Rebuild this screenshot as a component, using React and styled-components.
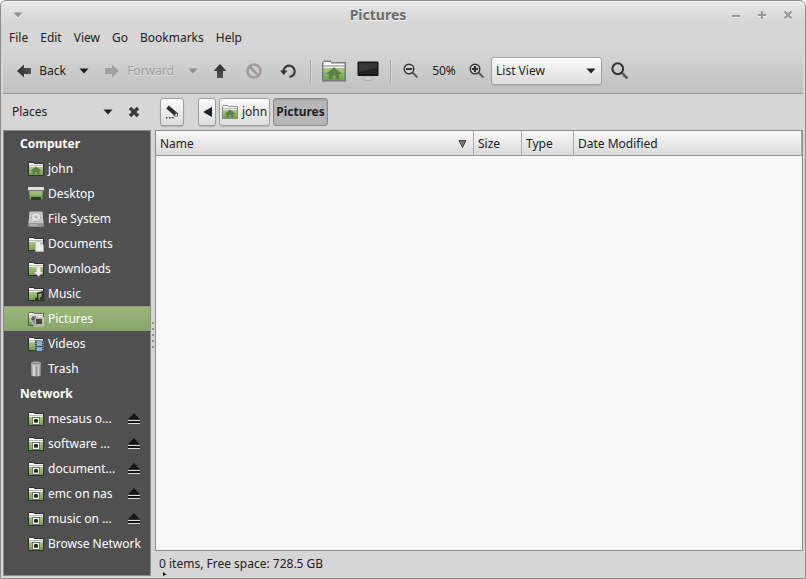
import styled, { createGlobalStyle, css } from "styled-components";

const GlobalStyle = createGlobalStyle`
  * {
    box-sizing: border-box;
  }
  body {
    margin: 0;
    background: #ffffff;
    color: #212121;
    font: 12px/16px "Noto Sans", sans-serif;
  }
  button, select {
    margin: 0;
    padding: 0;
    border: none;
    background: none;
    color: inherit;
    font: inherit;
  }
  svg {
    display: block;
    flex: none;
  }
`;

const Window = styled.div`
  display: flex;
  flex-direction: column;
  min-height: 100vh;
  padding: 0 2px 2px;
  border: 1px solid #8b8b8b;
  border-radius: 6px 6px 0 0;
  background: linear-gradient(#e8e8e8, #d6d6d6 22px);
  box-shadow: inset 0 1px #f4f4f4;
`;

const TitleBar = styled.header`
  display: grid;
  grid-template-columns: 30px 1fr 80px;
  align-items: center;
  height: 26px;
  padding-top: 2px;
`;

const Title = styled.h1`
  margin: 0;
  color: #6c6c6c;
  font-size: 14px;
  line-height: 20px;
  text-align: center;
  text-shadow: 0 1px #f2f2f2;
`;

const TitleButtons = styled.div`
  display: flex;
`;

const TitleButton = styled.button`
  display: grid;
  place-items: center;
  width: ${(p) => p.$width || 26}px;
  height: 20px;
  filter: drop-shadow(0 1px #f2f2f2);
`;

const MenuBar = styled.nav`
  display: flex;
  height: 22px;
`;

const MenuItem = styled.button`
  padding: 0 6px;
`;

const Toolbar = styled.div`
  display: flex;
  align-items: center;
  height: 45px;
  padding-left: 6px;
  border-bottom: 1px solid #979797;
  background: linear-gradient(#d6d6d6, #c0c0c0);
`;

const ToolButton = styled.button`
  display: flex;
  align-items: center;
  justify-content: center;
  gap: 7px;
  width: ${(p) => p.$width}px;
  height: 32px;
  flex: none;
  &:disabled {
    color: #9d9d9d;
    text-shadow: 0 1px #e2e2e2;
  }
`;

const Separator = styled.div`
  width: 2px;
  height: 22px;
  margin: 0 5px;
  flex: none;
  border-left: 1px solid #a3a3a3;
  border-right: 1px solid #dadada;
`;

const Zoom = styled.span`
  width: 38px;
  text-align: center;
`;

const raised = css`
  border: 1px solid #a0a0a0;
  border-radius: 3px;
  background: linear-gradient(#fbfbfb, #dcdcdc);
  box-shadow: 0 1px 1px #b4b4b4, inset 0 1px #ffffff;
`;

const SelectBox = styled.div`
  position: relative;
  width: 111px;
  margin-right: 4px;
  svg {
    position: absolute;
    top: 11px;
    right: 6px;
    pointer-events: none;
  }
`;

const Select = styled.select`
  ${raised}
  width: 100%;
  height: 28px;
  padding-left: 4px;
  appearance: none;
`;

const Main = styled.div`
  display: flex;
  flex: 1;
`;

const Side = styled.aside`
  display: flex;
  flex-direction: column;
  width: 148px;
  flex: none;
`;

const SideHeader = styled.div`
  display: flex;
  align-items: center;
  height: 36px;
  padding: 0 6px 0 9px;
`;

const PlacesButton = styled.button`
  display: flex;
  flex: 1;
  align-items: center;
  justify-content: space-between;
`;

const CloseButton = styled.button`
  display: grid;
  place-items: center;
  width: 22px;
  height: 22px;
  margin-left: 10px;
`;

const Places = styled.div`
  flex: 1;
  border: 1px solid #8b8b8b;
  background: #505050;
  color: #ffffff;
`;

const Group = styled.h2`
  margin: 0;
  padding-left: 16px;
  font-size: 12px;
  line-height: 25px;
`;

const PlaceList = styled.ul`
  margin: 0;
  padding: 0;
  list-style: none;
`;

const Place = styled.li`
  display: flex;
  align-items: center;
  height: 25px;
  padding: 0 9px 0 24px;
  ${(p) =>
    p.$active &&
    css`
      background: linear-gradient(#9ab87c, #87a668);
      box-shadow: inset 0 1px #8d9d80, inset 0 -1px #8d9d80;
    `}
`;

const PlaceLink = styled.a`
  display: flex;
  align-items: center;
  gap: 4px;
  flex: 1;
  min-width: 0;
  color: #ffffff;
  text-decoration: none;
  white-space: nowrap;
`;

const Eject = styled.button`
  display: grid;
  place-items: center;
  width: 14px;
  height: 16px;
`;

const Splitter = styled.div`
  display: flex;
  flex-direction: column;
  align-items: center;
  justify-content: center;
  gap: 4px;
  width: 4px;
  flex: none;
`;

const Grip = styled.i`
  width: 2px;
  height: 2px;
  background: #8f8f8f;
`;

const Content = styled.main`
  display: flex;
  flex-direction: column;
  flex: 1;
  min-width: 0;
`;

const PathBar = styled.nav`
  display: flex;
  align-items: center;
  gap: 3px;
  height: 36px;
  padding-left: 5px;
`;

const PathButton = styled.button`
  ${raised}
  display: flex;
  align-items: center;
  justify-content: center;
  gap: 4px;
  height: 28px;
  padding: 0 2px;
  ${(p) =>
    p.$active &&
    css`
      border-color: #8b8b8b;
      background: #b6b6b6;
      box-shadow: inset 0 1px 2px #999999;
      font-weight: bold;
    `}
`;

const EditButton = styled(PathButton)`
  width: 24px;
  margin-right: 11px;
`;

const ScrollButton = styled(PathButton)`
  width: 18px;
`;

const FileView = styled.section`
  flex: 1;
  border: 1px solid #8b8b8b;
  background: #f7f7f7;
`;

const Table = styled.table`
  width: 100%;
  border-spacing: 0;
  table-layout: fixed;
`;

const Column = styled.th`
  width: ${(p) => p.$width || "auto"};
  height: 25px;
  padding: 2px 6px 0 4px;
  border-right: 1px solid #adadad;
  border-bottom: 1px solid #979797;
  background: linear-gradient(#f9f9f9, #d9d9d9);
  font-weight: normal;
  text-align: left;
`;

const ColumnLabel = styled.div`
  display: flex;
  align-items: center;
  justify-content: space-between;
`;

const Status = styled.footer`
  position: relative;
  height: 25px;
  padding: 5px 4px;
`;

const Pointer = styled.svg`
  position: absolute;
  left: 8px;
  bottom: 0;
`;

const Caret = ({ color = "#212121" }) => (
  <svg width="10" height="6" viewBox="0 0 10 6">
    <path d="M.5.5h9L5 5.5z" fill={color} />
  </svg>
);

const Arrow = ({ rotate = 0, color = "#2d2d2d", end = "#555" }) => (
  <svg width="16" height="16" viewBox="0 0 16 16">
    <defs>
      <linearGradient id={`arrow${rotate}`}>
        <stop stopColor={color} />
        <stop offset="1" stopColor={end} />
      </linearGradient>
    </defs>
    <path d="M1 8l7-6.500v3.500h7v6H8v3.500z" fill={`url(#arrow${rotate})`} transform={`rotate(${rotate} 8 8)`} />
  </svg>
);

const Stop = () => (
  <svg width="16" height="16" viewBox="0 0 16 16" fill="none" stroke="#a29b9b" strokeWidth="2.6">
    <circle cx="8" cy="8" r="6.5" />
    <path d="M3.5 3.5l9 9" />
  </svg>
);

const Reload = () => (
  <svg width="16" height="16" viewBox="0 0 16 16">
    <path d="M3.500 8.500A5.600 5.600 0 1 1 9.500 13.900" fill="none" stroke="#3a3a3a" strokeWidth="2.200" />
    <path d="M0 7.500h7.500L3.700 12z" fill="#333" />
  </svg>
);

const Magnifier = ({ sign, size = 16 }) => (
  <svg width={size} height={size} viewBox="0 0 16 16" fill="none" stroke="#333">
    <path d="M9.5 9.5l5 5" stroke="#5a5a5a" strokeWidth={sign ? 1.8 : 2.3} />
    <circle cx="6" cy="6" r="4.8" fill={sign ? "#d0d0d0" : "none"} strokeWidth={sign ? 1.4 : 1.8} />
    {sign && <path d="M3 6h6" strokeWidth="2" />}
    {sign === "+" && <path d="M6 3v6" strokeWidth="2" />}
  </svg>
);

const Monitor = () => (
  <svg width="22" height="20" viewBox="0 0 22 20">
    <ellipse cx="11" cy="17.5" rx="5" ry="1.8" fill="#e4e4e4" stroke="#888" strokeWidth=".7" />
    <path d="M9 14h4v3.5H9z" fill="#c5c5c5" />
    <rect x=".5" y=".5" width="21" height="14.500" rx="1" fill="#171717" />
    <path d="M2 2h18v5L2 11z" fill="#373737" />
    <path d="M2 11l18-4v6H2z" fill="#242424" />
  </svg>
);

const Edit = () => (
  <svg width="16" height="16" viewBox="0 0 16 16">
    <path d="M3.500 3l7.500 6.500" stroke="#2e2e2e" strokeWidth="4" />
    <path d="M9.300 11.300l3-3.600 1.700 1.600v3.200h-3.300z" fill="#3a3a3a" />
    <path d="M10.800 11.200l1.700-1.900.9.900v1.700h-1.900z" fill="#eeeeee" />
    <path d="M2 13h1.500v1.500H2zM5 13h1.500v1.500H5zM8 13h1.500v1.500H8z" fill="#444" />
  </svg>
);

// small drawings that lie over the folder of each place
const emblems = {
  home: <path d="M8 5.500L2.500 10h2v3.500H7V11h2v2.500h2.500V10h2z" fill="#5b8149" />,
  documents: (
    <g>
      <path d="M7.500 5.500H12L15.500 9v6.500h-8z" fill="#eee" stroke="#bbb" strokeWidth=".5" />
      <path d="M12 5.500V9h3.500z" fill="#c8c8c8" />
    </g>
  ),
  downloads: <path d="M8.500 6h4v5H15l-4.500 4.500L6 11h2.500z" fill="#f1f1f1" stroke="#999" strokeWidth=".4" />,
  music: (
    <g fill="#333">
      <path d="M9 6.500L15 5v2l-4.500 1v5H9zM13.500 6H15v6.500h-1.500z" />
      <circle cx="8.800" cy="13.300" r="1.800" />
      <circle cx="13.500" cy="12.500" r="1.800" />
    </g>
  ),
  pictures: (
    <g>
      <path d="M2.500 8.500L4 5l3.500-1L9 6.500h6.500v8.500h-9z" fill="#8d8d8d" stroke="#e2e2e2" strokeWidth=".8" />
      <circle cx="5" cy="7.500" r="1.500" fill="#555" />
      <path d="M7.500 7.500h7v6h-7z" fill="#454545" stroke="#b8b8b8" />
    </g>
  ),
  videos: (
    <g>
      <path d="M7 4.500h9v11H7z" fill="#3b4c56" />
      <path d="M9 5h5v5H9zM9 11h5v4H9z" fill="#86b2ca" />
      <path d="M8 5v10M15 5v10" stroke="#b9cdd6" strokeDasharray="1 1" />
    </g>
  ),
  network: (
    <g>
      <path d="M4 6h8v8H4z" fill="#6a7d58" />
      <path d="M5 7h6v6H5z" fill="#f0f0f0" />
      <path d="M6 8h4v4H6z" fill="#777" />
      <path d="M7 8h2v1h1v2H6V9h1z" fill="#262626" />
    </g>
  ),
};

const FolderIcon = ({ emblem, size = 16 }) => (
  <svg width={size} height={size} viewBox="0 0 16 16">
    <defs>
      <linearGradient id="folder" x2="0" y2="1">
        <stop stopColor="#a8ca80" />
        <stop offset="1" stopColor="#759f4b" />
      </linearGradient>
    </defs>
    <path d="M0 15V2h1V1h5v1h10v13z" fill="#000000" fillOpacity=".4" />
    <path d="M1 4V2h5v1h9v1z" fill="#fbfbfb" />
    <path d="M1 4h14v1H1z" fill="#b8b8b8" />
    <path d="M1 5h14v1H1z" fill="#eeeeee" />
    <path d="M1 6h14v8H1z" fill="url(#folder)" />
    {emblems[emblem]}
  </svg>
);

const DesktopIcon = () => (
  <svg width="16" height="16" viewBox="0 0 16 16">
    <path d="M1 3h14v11H1z" fill="#80a958" stroke="#435336" />
    <path d="M1.500 5h13v4h-13z" fill="#9bbd76" />
    <path d="M0 1h16v3H0z" fill="#dedede" />
    <path d="M0 4h16v1H0z" fill="#777" />
    <path d="M3 11h10v3H3z" fill="#303b27" />
  </svg>
);

const DiskIcon = () => (
  <svg width="16" height="16" viewBox="0 0 16 16">
    <path d="M1.500 .5h13l1 11v4H.5v-4z" fill="#c9c9c9" />
    <path d="M.5 12h15v3.500H.5z" fill="#929292" />
    <ellipse cx="8" cy="6" rx="5" ry="4.500" fill="#dedede" stroke="#aaa" />
    <circle cx="8" cy="6" r="1.500" fill="#aaa" />
    <path d="M4 10l4-3" stroke="#f8f8f8" />
    <path d="M2 14h7" stroke="#ccc" />
  </svg>
);

const TrashIcon = () => (
  <svg width="16" height="16" viewBox="0 0 16 16">
    <defs>
      <linearGradient id="trash">
        <stop stopColor="#858585" />
        <stop offset=".3" stopColor="#e0e0e0" />
        <stop offset=".55" stopColor="#969696" />
        <stop offset=".75" stopColor="#c9c9c9" />
        <stop offset="1" stopColor="#777" />
      </linearGradient>
    </defs>
    <path d="M3 2.500h10v12Q8 16.500 3 14.500z" fill="url(#trash)" />
    <ellipse cx="8" cy="2.500" rx="4.800" ry="1.500" fill="#8a8a8a" stroke="#ccc" strokeWidth=".8" />
  </svg>
);

const EjectIcon = () => (
  <svg width="12" height="12" viewBox="0 0 12 12">
    <path d="M6 0L12 6.500H0z" fill="#151515" />
    <path d="M0 7h12v1H0zM0 10h12v1H0z" fill="#dddddd" />
    <path d="M0 8h12v2H0z" fill="#151515" />
  </svg>
);

const computer = [
  { name: "john", icon: <FolderIcon emblem="home" /> },
  { name: "Desktop", icon: <DesktopIcon /> },
  { name: "File System", icon: <DiskIcon /> },
  { name: "Documents", icon: <FolderIcon emblem="documents" /> },
  { name: "Downloads", icon: <FolderIcon emblem="downloads" /> },
  { name: "Music", icon: <FolderIcon emblem="music" /> },
  { name: "Pictures", icon: <FolderIcon emblem="pictures" />, active: true },
  { name: "Videos", icon: <FolderIcon emblem="videos" /> },
  { name: "Trash", icon: <TrashIcon /> },
];

const network = [
  { name: "mesaus o...", mounted: true },
  { name: "software ...", mounted: true },
  { name: "document...", mounted: true },
  { name: "emc on nas", mounted: true },
  { name: "music on ...", mounted: true },
  { name: "Browse Network" },
];

const PlaceRow = ({ name, icon, active, mounted }) => (
  <Place $active={active}>
    <PlaceLink href="#">
      {icon || <FolderIcon emblem="network" />}
      {name}
    </PlaceLink>
    {mounted && (
      <Eject aria-label={`Eject ${name}`}>
        <EjectIcon />
      </Eject>
    )}
  </Place>
);

const App = () => {
  return (
    <>
      <GlobalStyle />
      <Window>
        <TitleBar>
          <TitleButton $width={30} aria-label="Window menu">
            <Caret color="#929292" />
          </TitleButton>
          <Title>Pictures</Title>
          <TitleButtons>
            <TitleButton aria-label="Minimize">
              <svg width="10" height="10" viewBox="0 0 10 10">
                <path d="M1 6h8" stroke="#979797" strokeWidth="2" />
              </svg>
            </TitleButton>
            <TitleButton aria-label="Maximize">
              <svg width="10" height="10" viewBox="0 0 10 10">
                <path d="M1 5h8M5 1v8" stroke="#979797" strokeWidth="2" />
              </svg>
            </TitleButton>
            <TitleButton aria-label="Close">
              <svg width="10" height="10" viewBox="0 0 10 10">
                <path d="M1.500 1.500l7 7M8.500 1.500l-7 7" stroke="#979797" strokeWidth="2.400" />
              </svg>
            </TitleButton>
          </TitleButtons>
        </TitleBar>

        <MenuBar>
          {["File", "Edit", "View", "Go", "Bookmarks", "Help"].map((item) => (
            <MenuItem key={item}>{item}</MenuItem>
          ))}
        </MenuBar>

        <Toolbar>
          <ToolButton $width={64}>
            <Arrow />
            Back
          </ToolButton>
          <ToolButton $width={22} aria-label="Back history">
            <Caret />
          </ToolButton>
          <ToolButton $width={88} disabled>
            <Arrow rotate={180} color="#a0a0a0" end="#a0a0a0" />
            Forward
          </ToolButton>
          <ToolButton $width={20} aria-label="Forward history" disabled>
            <Caret color="#8e8e8e" />
          </ToolButton>
          <ToolButton $width={34} aria-label="Up">
            <Arrow rotate={90} />
          </ToolButton>
          <ToolButton $width={34} aria-label="Stop" disabled>
            <Stop />
          </ToolButton>
          <ToolButton $width={34} aria-label="Reload">
            <Reload />
          </ToolButton>
          <Separator />
          <ToolButton $width={34} aria-label="Home">
            <FolderIcon emblem="home" size={24} />
          </ToolButton>
          <ToolButton $width={34} aria-label="Computer">
            <Monitor />
          </ToolButton>
          <Separator />
          <ToolButton $width={28} aria-label="Zoom out">
            <Magnifier sign="-" />
          </ToolButton>
          <Zoom>50%</Zoom>
          <ToolButton $width={28} aria-label="Zoom in">
            <Magnifier sign="+" />
          </ToolButton>
          <SelectBox>
            <Select aria-label="View as" defaultValue="List View">
              <option>Icon View</option>
              <option>List View</option>
              <option>Compact View</option>
            </Select>
            <Caret />
          </SelectBox>
          <ToolButton $width={28} aria-label="Search">
            <Magnifier size={18} />
          </ToolButton>
        </Toolbar>

        <Main>
          <Side>
            <SideHeader>
              <PlacesButton>
                Places
                <Caret />
              </PlacesButton>
              <CloseButton aria-label="Close side pane">
                <svg width="12" height="12" viewBox="0 0 12 12">
                  <path d="M2 2l8 8M10 2l-8 8" stroke="#3a3a3a" strokeWidth="3.400" />
                </svg>
              </CloseButton>
            </SideHeader>
            <Places>
              <Group>Computer</Group>
              <PlaceList>
                {computer.map((place) => (
                  <PlaceRow key={place.name} {...place} />
                ))}
              </PlaceList>
              <Group>Network</Group>
              <PlaceList>
                {network.map((place) => (
                  <PlaceRow key={place.name} {...place} />
                ))}
              </PlaceList>
            </Places>
          </Side>

          <Splitter>
            <Grip />
            <Grip />
            <Grip />
            <Grip />
            <Grip />
          </Splitter>

          <Content>
            <PathBar>
              <EditButton aria-label="Edit location">
                <Edit />
              </EditButton>
              <ScrollButton aria-label="Scroll path left">
                <svg width="9" height="10" viewBox="0 0 9 10">
                  <path d="M0 5l9-5v10z" fill="#212121" />
                </svg>
              </ScrollButton>
              <PathButton>
                <FolderIcon emblem="home" />
                john
              </PathButton>
              <PathButton $active>Pictures</PathButton>
            </PathBar>
            <FileView>
              <Table>
                <thead>
                  <tr>
                    <Column $width="318px" aria-sort="descending">
                      <ColumnLabel>
                        Name
                        <svg width="9" height="8" viewBox="0 0 9 8">
                          <path d="M1 .5h7l-3.500 7z" fill="#777" stroke="#444" />
                        </svg>
                      </ColumnLabel>
                    </Column>
                    <Column $width="48px">Size</Column>
                    <Column $width="52px">Type</Column>
                    <Column>Date Modified</Column>
                  </tr>
                </thead>
              </Table>
            </FileView>
            <Status>
              0 items, Free space: 728.5 GB
              <Pointer width="5" height="4" viewBox="0 0 5 4">
                <path d="M0 0l4 3H2l-2 1z" fill="#111" />
              </Pointer>
            </Status>
          </Content>
        </Main>
      </Window>
    </>
  );
};

export default App;
